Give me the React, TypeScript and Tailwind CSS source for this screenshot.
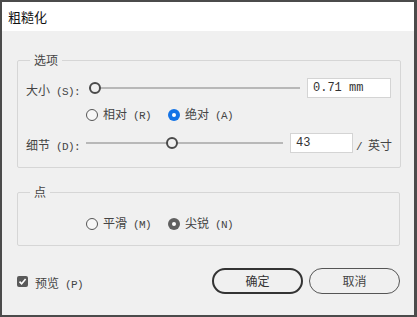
import type { ReactNode } from "react";

const font = { fontFamily: '"Noto Sans CJK SC", "Noto Sans", sans-serif' };
const mono = { fontFamily: '"Liberation Mono", monospace' };

// CJK part plus half-width latin part, like the dialog's bitmap font
function Lbl({ cjk, latin, pre }: { cjk: string; latin?: string; pre?: string }) {
  return (
    <span className="whitespace-pre text-[12px] leading-[16px] text-[#444]">
      {pre ? <span className="text-[11px] tracking-[-0.6px]" style={mono}>{pre}</span> : null}
      {cjk}
      {latin ? <span className="text-[11px] tracking-[-0.6px]" style={mono}>{latin}</span> : null}
    </span>
  );
}

function Radio({ checked, tone }: { checked?: boolean; tone?: "blue" | "gray" }) {
  if (!checked) {
    return <span className="box-border block h-[12px] w-[12px] rounded-full border-[1.5px] border-[#555] bg-[#f7f7f7]" />;
  }
  const bg = tone === "blue" ? "bg-[#1473e6]" : "bg-[#606060]";
  return (
    <span className={`flex h-[12px] w-[12px] items-center justify-center rounded-full ${bg}`}>
      <span className="block h-[4px] w-[4px] rounded-full bg-white" />
    </span>
  );
}

function RadioOption({ cjk, latin, checked, tone }: { cjk: string; latin: string; checked?: boolean; tone?: "blue" | "gray" }) {
  return (
    <div className="flex items-center gap-[5px]">
      <Radio checked={checked} tone={tone} />
      <Lbl cjk={cjk} latin={latin} />
    </div>
  );
}

function Slider({ width, value }: { width: number; value: number }) {
  const travel = width - 11;
  return (
    <div className="relative flex h-[20px] items-center" style={{ width }}>
      <div className="h-[2px] w-full bg-[#b8b8b8]" />
      <span
        className="absolute top-[4px] box-border block h-[12px] w-[12px] rounded-full border-2 border-[#4a4a4a] bg-[#f0f0f0]"
        style={{ left: Math.round(travel * value) }}
      />
    </div>
  );
}

function Group({ title, children, className }: { title: string; children: ReactNode; className?: string }) {
  return (
    <fieldset className={`rounded-[2px] border border-[#d6d6d6] px-[8px] ${className ?? ""}`}>
      <legend className="ml-[4px] px-[4px] text-[12px] leading-[16px] text-[#444]">{title}</legend>
      {children}
    </fieldset>
  );
}

export default function App() {
  return (
    <div
      className="box-border flex h-[317px] w-[417px] flex-col border-t-2 border-r-[3px] border-b-2 border-l-2 border-[#4b4b4b] bg-[#f0f0f0]"
      style={font}
    >
      <div className="flex h-[29px] items-center bg-white pl-[6px] text-[13px] text-[#111]">粗糙化</div>

      <div className="flex flex-1 flex-col pl-[15px] pr-[14px]">
        <Group title="选项" className="mt-[21px] pb-[14px]">
          <div className="mt-[10px] flex h-[20px] items-center">
            <span className="w-[63px]">
              <Lbl cjk="大小" latin=" (S):" />
            </span>
            <Slider width={211} value={0} />
            <div className="ml-[7px] box-border flex h-[20px] w-[84px] items-center border border-[#d4d4d4] bg-white pl-[5px] text-[12px] text-[#333]" style={mono}>
              0.71 mm
            </div>
          </div>
          <div className="mt-[9px] flex h-[16px] items-center gap-[17px] pl-[60px]">
            <RadioOption cjk="相对" latin=" (R)" />
            <RadioOption cjk="绝对" latin=" (A)" checked tone="blue" />
          </div>
          <div className="mt-[10px] flex h-[20px] items-center">
            <span className="w-[60px]">
              <Lbl cjk="细节" latin=" (D):" />
            </span>
            <Slider width={197} value={0.43} />
            <div className="ml-[7px] box-border flex h-[20px] w-[63px] items-center border border-[#d4d4d4] bg-white pl-[5px] text-[12px] text-[#333]" style={mono}>
              43
            </div>
            <span className="ml-[3px]">
              <Lbl pre="/ " cjk="英寸" />
            </span>
          </div>
        </Group>

        <Group title="点" className="mt-[16px] pb-[13px]">
          <div className="mt-[16px] flex h-[16px] items-center gap-[17px] pl-[60px]">
            <RadioOption cjk="平滑" latin=" (M)" />
            <RadioOption cjk="尖锐" latin=" (N)" checked tone="gray" />
          </div>
        </Group>

        <div className="mt-[22px] flex items-center">
          <span className="flex h-[11px] w-[11px] items-center justify-center rounded-[2px] bg-[#5a5a5a]">
            <svg width="9" height="9" viewBox="0 0 9 9" fill="none">
              <path d="M1.5 4.6 L3.6 6.8 L7.6 2" stroke="white" strokeWidth="1.6" />
            </svg>
          </span>
          <span className="ml-[7px]">
            <Lbl cjk="预览" latin=" (P)" />
          </span>
          <div className="ml-auto flex gap-[6px]">
            <button className="box-border h-[26px] w-[91px] rounded-full border-2 border-[#333] text-[12px] text-[#333]">确定</button>
            <button className="box-border h-[26px] w-[91px] rounded-full border-[1.5px] border-[#555] text-[12px] text-[#444]">取消</button>
          </div>
        </div>
      </div>
    </div>
  );
}
